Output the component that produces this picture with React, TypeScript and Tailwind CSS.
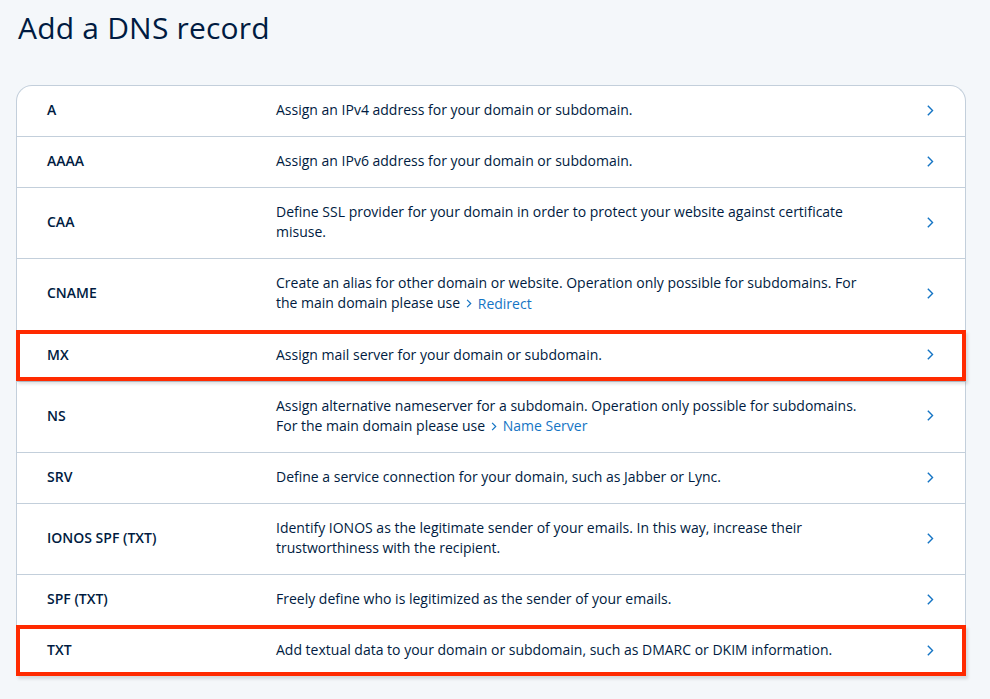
import React from "react";

type Rec = {
  type: string;
  desc: React.ReactNode;
  marked?: boolean;
};

const Chevron = ({ className = "" }: { className?: string }) => (
  <svg
    viewBox="0 0 8 12"
    className={className}
    fill="none"
    stroke="currentColor"
    strokeWidth={1.6}
    strokeLinecap="square"
  >
    <path d="M1.5 1.2 L6.3 6 L1.5 10.8" />
  </svg>
);

const Link = ({ children }: { children: React.ReactNode }) => (
  <span className="inline-flex items-center gap-[6px] text-[#1474c4] whitespace-nowrap align-baseline">
    <svg viewBox="0 0 8 12" className="w-[6px] h-[9px] ml-[2px]" fill="none" stroke="currentColor" strokeWidth={1.6}>
      <path d="M1.5 1.2 L6.3 6 L1.5 10.8" />
    </svg>
    <span>{children}</span>
  </span>
);

const records: Rec[] = [
  { type: "A", desc: "Assign an IPv4 address for your domain or subdomain." },
  { type: "AAAA", desc: "Assign an IPv6 address for your domain or subdomain." },
  {
    type: "CAA",
    desc: "Define SSL provider for your domain in order to protect your website against certificate misuse.",
  },
  {
    type: "CNAME",
    desc: (
      <>
        Create an alias for other domain or website. Operation only possible for subdomains. For the main domain please use <Link>Redirect</Link>
      </>
    ),
  },
  { type: "MX", desc: "Assign mail server for your domain or subdomain.", marked: true },
  {
    type: "NS",
    desc: (
      <>
        Assign alternative nameserver for a subdomain. Operation only possible for subdomains. For the main domain please use <Link>Name Server</Link>
      </>
    ),
  },
  { type: "SRV", desc: "Define a service connection for your domain, such as Jabber or Lync." },
  {
    type: "IONOS SPF (TXT)",
    desc: "Identify IONOS as the legitimate sender of your emails. In this way, increase their trustworthiness with the recipient.",
  },
  { type: "SPF (TXT)", desc: "Freely define who is legitimized as the sender of your emails." },
  {
    type: "TXT",
    desc: "Add textual data to your domain or subdomain, such as DMARC or DKIM information.",
    marked: true,
  },
];

export default function App() {
  return (
    <div
      className="min-h-screen bg-[#f4f7fa] text-[#001b41] pl-4 pr-6"
      style={{ fontFamily: '"Open Sans", "Noto Sans", sans-serif' }}
    >
      <h1 className="pt-[8px] pl-[2px] text-[30px] leading-[40px] font-normal tracking-[0.2px]">
        Add a DNS record
      </h1>
      <div className="mt-[37px] w-[950px] bg-white border border-[#c3cfdb] border-b-0 rounded-t-[16px]">
        {records.map((r, i) => (
          <div
            key={r.type}
            className={`relative flex items-center min-h-[50px] pt-[14px] pb-[16px] ${
              i < records.length - 1 ? "border-b border-[#c3cfdb]" : ""
            }`}
          >
            <div className="w-[259px] pl-[30px] shrink-0 text-[14px] leading-[20px] font-semibold">
              {r.type}
            </div>
            <div className="w-[600px] text-[14px] leading-[20px] text-[#001b41]">{r.desc}</div>
            <div className="flex-1 flex justify-end pr-[31px]">
              <Chevron className="w-[7px] h-[11px] text-[#1474c4]" />
            </div>
            {r.marked && (
              <div className="absolute left-[-1px] right-[-1px] top-[-1px] bottom-[0px] border-[4px] border-[#ff2a00] shadow-[2px_3px_3px_rgba(0,0,0,0.12)] pointer-events-none" />
            )}
          </div>
        ))}
      </div>
    </div>
  );
}
